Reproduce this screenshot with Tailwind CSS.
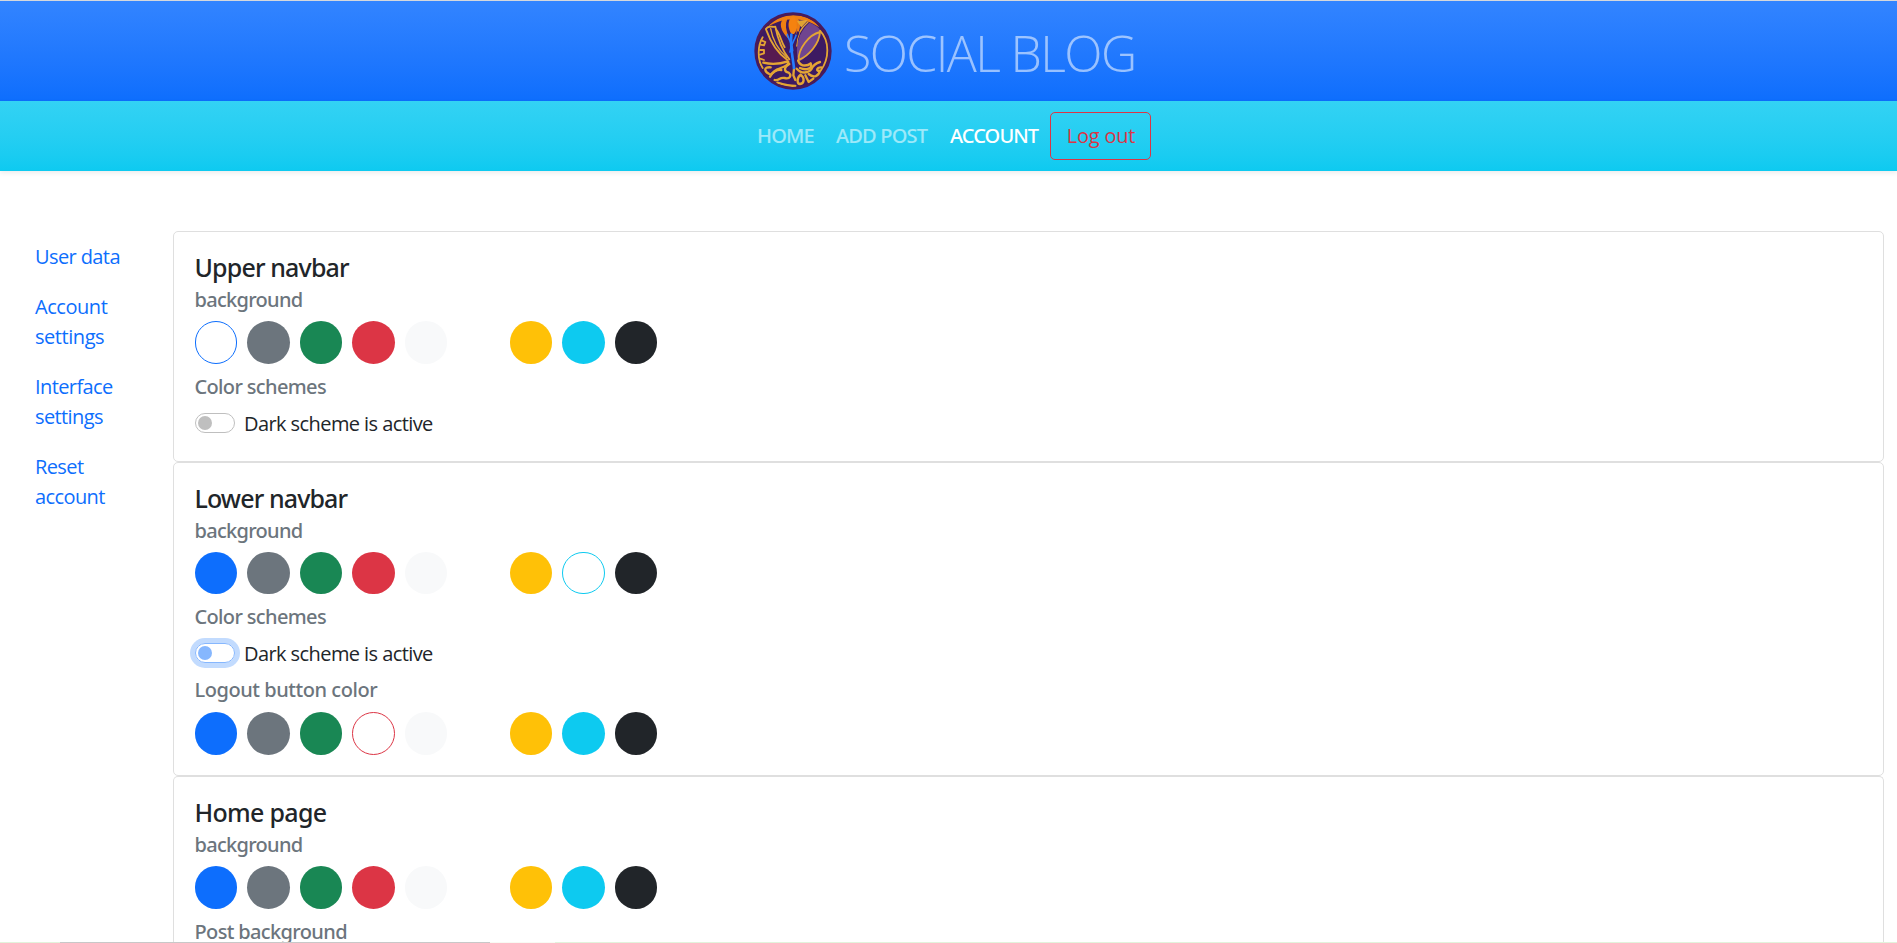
<!DOCTYPE html>
<html lang="en">
<head>
<meta charset="utf-8">
<title>Social Blog</title>
<script src="https://cdn.jsdelivr.net/npm/@tailwindcss/browser@4"></script>
</head>
<body class="relative h-[943px] overflow-hidden bg-white font-['Open_Sans','Noto_Sans',sans-serif] text-[20px] leading-[30px] text-[#212529]">

<header class="flex h-[101px] border-t border-[#d5d8dc] bg-linear-to-b from-[#3284ff] to-[#0d6efd] pt-[11px] pl-[754px]">
  <a class="flex" href="#">
    <svg class="size-[78px]" viewBox="42 36 234 234" fill="none" stroke-linecap="round" stroke-linejoin="round">
      <circle cx="159" cy="153" r="112" fill="#3d1a62"/>
      <path d="M62 118C60 146 60 168 67 188C86 193 124 192 150 186C130 174 104 150 82 112Z" fill="#561a50"/>
      <path d="M176 186C162 140 176 96 208 68C222 72 240 84 242 94C240 130 210 166 176 186Z" fill="#70458f"/>
      <path d="M82 82C106 54 140 46 160 46C194 46 224 60 238 82C210 64 186 58 160 58C128 58 104 68 82 82Z" fill="#ef7f12"/>
      <path d="M154 50C140 68 146 88 154 102L162 102C174 88 176 66 164 50Z" fill="#f5820f"/>
      <path d="M136 54C116 66 124 92 144 112C136 90 132 74 140 56ZM172 56C182 74 178 92 168 108C176 88 172 72 168 56Z" fill="#ef7f12" stroke="#ef7f12" stroke-width="4"/>
      <path d="M174 64L200 62L184 79Z" fill="#dda333" stroke="#e6a632" stroke-width="4"/>
      <g stroke="#e4a534" stroke-width="5.500">
        <path d="M78 86C86 76 96 82 106 80C112 112 126 150 148 178"/>
        <path d="M78 88C88 116 108 156 142 180"/>
        <path d="M92 86C98 122 120 154 140 172" stroke-width="4"/>
        <path d="M108 88C120 100 122 122 134 142"/>
        <path d="M176 180C174 148 206 104 240 96C238 132 206 168 176 180Z"/>
        <path d="M240 92C270 124 268 176 242 212"/>
        <path d="M68 112C52 138 52 180 68 204"/>
        <path d="M66 122L76 126L72 136L62 134M60 150H72V160L60 164M60 176L72 180"/>
        <path d="M204 66C182 84 170 106 170 138" stroke-width="4"/>
      </g>
      <g stroke="#e4a534" stroke-width="7">
        <path d="M70 188C96 194 126 190 144 184C150 196 126 202 112 208C92 218 100 226 88 222C74 216 68 200 92 202"/>
        <path d="M148 192C128 204 134 216 146 218C156 226 150 238 134 234C118 230 118 244 104 240"/>
        <path d="M90 230C96 216 112 208 124 210"/>
        <path d="M112 248C132 254 148 258 166 258"/>
        <path d="M162 206L160 226L166 240"/>
        <path d="M174 182C184 204 206 196 212 190C220 206 198 212 180 204"/>
        <path d="M170 206C186 224 206 218 214 208C218 198 224 190 240 186"/>
        <path d="M182 224C168 236 172 252 180 252C194 250 194 234 182 224M196 226L206 246L220 236M206 222C222 236 236 228 240 212C228 216 228 202 244 202"/>
      </g>
      <path d="M174 98C158 134 166 160 168 194" stroke="#3d1a62" stroke-width="8"/>
      <path d="M142 104C148 124 158 130 158 152M168 106C164 122 152 130 150 156" stroke="#247cff" stroke-width="5"/>
      <path d="M154 104C150 146 158 166 162 204" stroke="#247cff" stroke-width="8"/>
      <circle cx="159" cy="153" r="112" stroke="#4a1b5a" stroke-width="8"/>
    </svg>
    <span class="mt-px ml-[12px] text-[50px] leading-[80px] font-light tracking-[-1.6px] whitespace-nowrap text-white/55">SOCIAL BLOG</span>
  </a>
</header>

<nav class="flex h-[70px] items-center justify-center gap-[20px] bg-linear-to-b from-[#33d2f4] to-[#0dcaf0] pb-px pl-[11px] whitespace-nowrap text-white/55 shadow-[0_2px_5px_rgba(0,0,0,0.08)]">
  <a class="w-[59px] pt-px font-['Noto_Sans'] font-medium tracking-[-0.8px]" href="#">HOME</a>
  <a class="w-[94px] pt-px font-['Noto_Sans'] font-medium tracking-[-0.8px]" href="#">ADD POST</a>
  <a class="w-[90px] pt-px font-['Noto_Sans'] font-medium tracking-[-0.9px] text-white" href="#">ACCOUNT</a>
  <button class="-ml-[10px] h-[48px] w-[101px] rounded-[5px] border border-[#dc3545] pl-px tracking-[-0.2px] text-[#dc3545]">Log out</button>
</nav>

<div class="flex pt-[60px]">
  <aside class="flex w-[173px] flex-col gap-[20px] pt-[11px] pl-[35px] tracking-[-0.6px] text-[#0d6efd]">
    <a href="#">User data</a>
    <a class="tracking-[-0.45px]" href="#">Account<br>settings</a>
    <a href="#">Interface<br>settings</a>
    <a href="#">Reset<br>account</a>
  </aside>

  <main class="w-[1711px]">
    <section class="h-[231px] rounded-[5px] border border-[#dfdfdf] px-[20.5px] pt-[20px]">
      <h5 class="font-['Noto_Sans'] text-[25px] leading-[30px] font-medium tracking-[-0.85px]">Upper navbar</h5>
      <h6 class="mt-[6px] font-['Noto_Sans'] leading-[24px] font-medium tracking-[-0.7px] text-[#6c757d]">background</h6>
      <div class="mt-[9px] flex gap-[10px]">
        <i class="size-[42.5px] rounded-full border border-[#0d6efd]"></i>
        <i class="size-[42.5px] rounded-full bg-[#6c757d]"></i>
        <i class="size-[42.5px] rounded-full bg-[#198754]"></i>
        <i class="size-[42.5px] rounded-full bg-[#dc3545]"></i>
        <i class="size-[42.5px] rounded-full bg-[#f8f9fa]"></i>
        <i class="size-[42.5px] rounded-full bg-white"></i>
        <i class="size-[42.5px] rounded-full bg-[#ffc107]"></i>
        <i class="size-[42.5px] rounded-full bg-[#0dcaf0]"></i>
        <i class="size-[42.5px] rounded-full bg-[#212529]"></i>
      </div>
      <h6 class="mt-[11px] font-['Noto_Sans'] leading-[24px] font-medium tracking-[-0.65px] text-[#6c757d]">Color schemes</h6>
      <label class="mt-[9px] flex">
        <span class="mt-[5px] flex h-[20px] w-[40px] items-center rounded-full border border-[#bfbfbf] pl-[2px]"><span class="size-[14px] rounded-full bg-[#bfbfbf]"></span></span>
        <span class="ml-[9.5px] pt-px tracking-[-0.58px]">Dark scheme is active</span>
      </label>
    </section>

    <section class="h-[314px] rounded-[5px] border border-[#dfdfdf] px-[20.5px] pt-[20px]">
      <h5 class="font-['Noto_Sans'] text-[25px] leading-[30px] font-medium tracking-[-0.88px]">Lower navbar</h5>
      <h6 class="mt-[6px] font-['Noto_Sans'] leading-[24px] font-medium tracking-[-0.7px] text-[#6c757d]">background</h6>
      <div class="mt-[8.5px] flex gap-[10px]">
        <i class="size-[42.5px] rounded-full bg-[#0d6efd]"></i>
        <i class="size-[42.5px] rounded-full bg-[#6c757d]"></i>
        <i class="size-[42.5px] rounded-full bg-[#198754]"></i>
        <i class="size-[42.5px] rounded-full bg-[#dc3545]"></i>
        <i class="size-[42.5px] rounded-full bg-[#f8f9fa]"></i>
        <i class="size-[42.5px] rounded-full bg-white"></i>
        <i class="size-[42.5px] rounded-full bg-[#ffc107]"></i>
        <i class="size-[42.5px] rounded-full border border-[#0dcaf0]"></i>
        <i class="size-[42.5px] rounded-full bg-[#212529]"></i>
      </div>
      <h6 class="mt-[11px] font-['Noto_Sans'] leading-[24px] font-medium tracking-[-0.65px] text-[#6c757d]">Color schemes</h6>
      <label class="mt-[9px] flex">
        <span class="mt-[5px] flex h-[20px] w-[40px] items-center rounded-full border border-[#86b7fe] pl-[2px] shadow-[0_0_0_5px_rgba(13,110,253,0.25)]"><span class="size-[14px] rounded-full bg-[#86b7fe]"></span></span>
        <span class="ml-[9.5px] pt-px tracking-[-0.58px]">Dark scheme is active</span>
      </label>
      <h6 class="mt-[9px] font-['Noto_Sans'] leading-[24px] font-medium tracking-[-0.45px] text-[#6c757d]">Logout button color</h6>
      <div class="mt-[10px] flex gap-[10px]">
        <i class="size-[42.5px] rounded-full bg-[#0d6efd]"></i>
        <i class="size-[42.5px] rounded-full bg-[#6c757d]"></i>
        <i class="size-[42.5px] rounded-full bg-[#198754]"></i>
        <i class="size-[42.5px] rounded-full border border-[#dc3545]"></i>
        <i class="size-[42.5px] rounded-full bg-[#f8f9fa]"></i>
        <i class="size-[42.5px] rounded-full bg-white"></i>
        <i class="size-[42.5px] rounded-full bg-[#ffc107]"></i>
        <i class="size-[42.5px] rounded-full bg-[#0dcaf0]"></i>
        <i class="size-[42.5px] rounded-full bg-[#212529]"></i>
      </div>
    </section>

    <section class="h-[167px] overflow-hidden rounded-t-[5px] border border-b-0 border-[#dfdfdf] px-[20.5px] pt-[20px]">
      <h5 class="font-['Noto_Sans'] text-[25px] leading-[30px] font-medium tracking-[-0.7px]">Home page</h5>
      <h6 class="mt-[6px] font-['Noto_Sans'] leading-[24px] font-medium tracking-[-0.7px] text-[#6c757d]">background</h6>
      <div class="mt-[9px] flex gap-[10px]">
        <i class="size-[42.5px] rounded-full bg-[#0d6efd]"></i>
        <i class="size-[42.5px] rounded-full bg-[#6c757d]"></i>
        <i class="size-[42.5px] rounded-full bg-[#198754]"></i>
        <i class="size-[42.5px] rounded-full bg-[#dc3545]"></i>
        <i class="size-[42.5px] rounded-full bg-[#f8f9fa]"></i>
        <i class="size-[42.5px] rounded-full bg-white"></i>
        <i class="size-[42.5px] rounded-full bg-[#ffc107]"></i>
        <i class="size-[42.5px] rounded-full bg-[#0dcaf0]"></i>
        <i class="size-[42.5px] rounded-full bg-[#212529]"></i>
      </div>
      <h6 class="mt-[11px] font-['Noto_Sans'] leading-[24px] font-medium tracking-[-0.64px] text-[#6c757d]">Post background</h6>
    </section>
  </main>
</div>

<!-- thin strip along the window's bottom edge -->
<div class="absolute inset-x-0 bottom-0 flex h-px bg-[#e2f3dc]">
  <span class="ml-[60px] w-[430px] bg-[#c8c8c8]"></span>
  <span class="w-[65px] bg-[#f8faf3]"></span>
</div>
</body>
</html>
